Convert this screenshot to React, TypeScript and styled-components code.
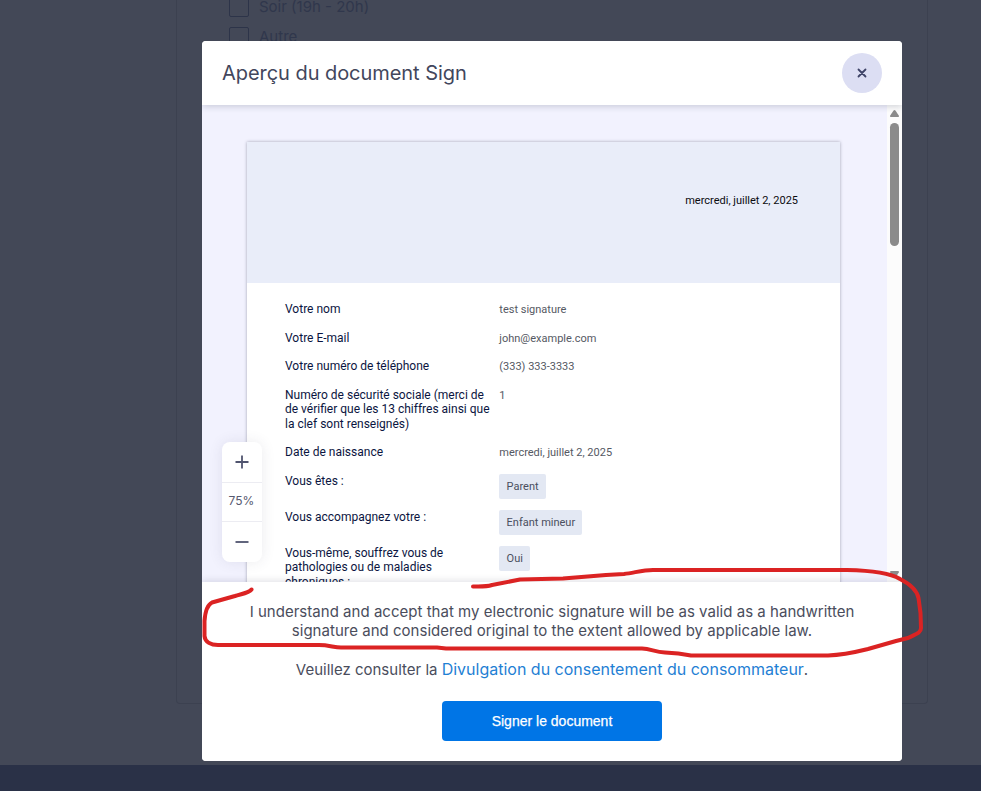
import React from 'react';
import styled, { createGlobalStyle } from 'styled-components';

const GlobalStyle = createGlobalStyle`
  *, *::before, *::after { box-sizing: border-box; }
  body { margin: 0; overflow: hidden; background: #434857; }
`;

const Page = styled.div`
  position: relative;
  display: flex;
  flex-direction: column;
  width: 981px;
  height: 791px;
  overflow: hidden;
  background: #434857;
  font-family: Inter, sans-serif;
`;

const FormCard = styled.section`
  display: flex;
  flex-direction: column;
  gap: 10px;
  width: 752px;
  height: 704px;
  margin-left: 176px;
  padding-left: 52px;
  border: 1px solid #3c4150;
  border-top: 0;
  border-radius: 0 0 4px 4px;
`;

const Option = styled.div`
  display: flex;
  align-items: center;
  gap: 10px;
  height: 20px;
  color: #30374c;
  font-size: 15px;
  line-height: 18px;

  &:first-child { margin-top: -3px; }
`;

const OptionText = styled.span`
  margin-top: -1px;
`;

const OptionBox = styled.span`
  width: 20px;
  height: 20px;
  border: 1px solid #2d3449;
  border-radius: 2px;
`;

const FooterBar = styled.div`
  height: 26px;
  margin-top: auto;
  background: #2a3147;
`;

const Overlay = styled.div`
  position: absolute;
  inset: 0;
  padding: 41px 79px 30px 202px;
`;

const Modal = styled.div`
  display: flex;
  flex-direction: column;
  height: 720px;
  overflow: hidden;
  border-radius: 4px;
  background: #fff;
`;

const Header = styled.header`
  position: relative;
  z-index: 1;
  display: flex;
  flex: none;
  align-items: center;
  justify-content: space-between;
  height: 64px;
  padding: 0 20px;
  background: #fff;
  box-shadow: 0 2px 6px rgba(40, 44, 70, 0.18);
`;

const Title = styled.h1`
  margin: 0;
  color: #42465c;
  font-size: 20px;
  font-weight: 400;
  line-height: 24px;
  letter-spacing: -0.05px;
`;

const CloseButton = styled.button`
  display: grid;
  place-items: center;
  width: 40px;
  height: 40px;
  padding: 0;
  border: 0;
  border-radius: 50%;
  background: #dcdef3;
`;

const Preview = styled.div`
  position: relative;
  display: flex;
  flex: none;
  height: 477px;
  overflow: hidden;
  background: #f2f2fe;
`;

const Viewport = styled.div`
  flex: 1;
  height: 477px;
  padding: 37px 47px 0 45px;
  overflow: hidden;
`;

const Paper = styled.article`
  width: 593px;
  height: 700px;
  background: #fff;
  box-shadow: 0 0 3px rgba(40, 44, 70, 0.4);
`;

const Banner = styled.div`
  display: flex;
  justify-content: flex-end;
  height: 141px;
  padding: 52px 42px 0 0;
  background: #e9edf9;
  color: #0b0b10;
  font: 11px/14px Roboto, sans-serif;
`;

const Fields = styled.dl`
  display: flex;
  flex-direction: column;
  gap: 14.2px;
  margin: 0;
  padding: 19.3px 38px 0;
  font-family: Roboto, sans-serif;
`;

const Field = styled.div<{ $chip?: boolean }>`
  display: grid;
  grid-template-columns: 214.3px 1fr;
  min-height: ${(p) => (p.$chip ? '21.8px' : '14.4px')};
`;

const Label = styled.dt`
  color: #0b1541;
  font-size: 12px;
  line-height: 14.4px;
  white-space: pre-line;
`;

const Value = styled.dd<{ $chip?: boolean }>`
  height: 14px;
  margin: 0;
  padding-top: ${(p) => (p.$chip ? '0' : '0.7px')};
  color: #555963;
  font-size: 11px;
  line-height: 14px;
`;

const Chip = styled.span`
  display: block;
  width: max-content;
  height: 25px;
  padding: 0 7.3px;
  border-radius: 2px;
  background: #e3e8f3;
  color: #4a4f60;
  line-height: 25px;
`;

const Scrollbar = styled.div`
  display: flex;
  flex: none;
  flex-direction: column;
  align-items: center;
  width: 15px;
  padding: 5px 0 4px;
  background: #fcfcfc;
`;

const Thumb = styled.div`
  width: 9px;
  height: 123px;
  margin: 6px 0 auto;
  border-radius: 5px;
  background: #8b8b8b;
`;

const ZoomPanel = styled.div`
  position: absolute;
  left: 20px;
  top: 337px;
  display: flex;
  flex-direction: column;
  width: 40px;
  height: 120px;
  border-radius: 8px;
  background: #fff;
  box-shadow: 0 0 14px rgba(60, 60, 90, 0.1);
`;

const ZoomCell = styled.div<{ $height: number }>`
  display: grid;
  place-items: center;
  height: ${(p) => p.$height}px;
  color: #565a70;
  font-size: 12px;

  & + & { border-top: 1px solid #ececf2; }
`;

const ZoomLevel = styled.span`
  margin: -3px 1px 0 0;
`;

const Consent = styled.footer`
  position: relative;
  display: flex;
  flex: 1;
  flex-direction: column;
  align-items: center;
  padding-top: 20px;
  background: #fff;
  box-shadow: 0 -2px 6px rgba(40, 44, 70, 0.12);
  color: #4a4d5c;
  font-size: 15px;
  text-align: center;
`;

const Statement = styled.p`
  margin: 0;
  line-height: 19px;
  letter-spacing: 0.025px;
  white-space: pre-line;
`;

const Disclosure = styled.p`
  margin: 19px 0 0;
  line-height: 20px;
`;

const DisclosureLink = styled.a`
  color: #1f80d4;
  font-size: 16px;
`;

const SignButton = styled.button`
  width: 220px;
  height: 40px;
  margin-top: 21px;
  padding: 0;
  border: 0;
  border-radius: 4px;
  background: #0075e6;
  color: #fff;
  font: 500 14px/20px "Liberation Sans", sans-serif;
  -webkit-text-stroke: 0.25px #fff;
`;

const Markup = styled.svg`
  position: absolute;
  inset: 0;
  pointer-events: none;
`;

const fields: { label: string; value: string; chip?: boolean }[] = [
  { label: 'Votre nom', value: 'test signature' },
  { label: 'Votre E-mail', value: 'john@example.com' },
  { label: 'Votre numéro de téléphone', value: '(333) 333-3333' },
  {
    label: 'Numéro de sécurité sociale (merci de\nde vérifier que les 13 chiffres ainsi que\nla clef sont renseignés)',
    value: '1',
  },
  { label: 'Date de naissance', value: 'mercredi, juillet 2, 2025' },
  { label: 'Vous êtes :', value: 'Parent', chip: true },
  { label: 'Vous accompagnez votre :', value: 'Enfant mineur', chip: true },
  { label: 'Vous-même, souffrez vous de\npathologies ou de maladies\nchroniques :', value: 'Oui', chip: true },
];

export default function App() {
  return (
    <Page>
      <GlobalStyle />
      <FormCard>
        <Option><OptionBox /><OptionText>Soir (19h - 20h)</OptionText></Option>
        <Option><OptionBox /><OptionText>Autre</OptionText></Option>
      </FormCard>
      <FooterBar />
      <Overlay>
        <Modal role="dialog" aria-label="Aperçu du document Sign">
          <Header>
            <Title>Aperçu du document Sign</Title>
            <CloseButton aria-label="Fermer">
              <svg width="10" height="10" viewBox="0 0 10 10" fill="none" stroke="#3f4468" strokeWidth="1.8" strokeLinecap="round">
                <path d="M1.500 1.500 8.500 8.500M8.500 1.500 1.500 8.500" />
              </svg>
            </CloseButton>
          </Header>
          <Preview>
            <Viewport>
              <Paper>
                <Banner>mercredi, juillet 2, 2025</Banner>
                <Fields>
                  {fields.map((f) => (
                    <Field key={f.label} $chip={f.chip}>
                      <Label>{f.label}</Label>
                      <Value $chip={f.chip}>{f.chip ? <Chip>{f.value}</Chip> : f.value}</Value>
                    </Field>
                  ))}
                </Fields>
              </Paper>
            </Viewport>
            <Scrollbar>
              <svg width="9" height="7" viewBox="0 0 9 7" fill="#8b8b8b"><path d="M3.6.6q.9-1.1 1.8 0L8.8 5.4Q9.3 7 8 7H1Q-.3 7 .2 5.4Z" /></svg>
              <Thumb />
              <svg width="9" height="7" viewBox="0 0 9 7" fill="#8b8b8b"><path d="M3.6 6.4q.9 1.1 1.8 0L8.8 1.6Q9.3 0 8 0H1Q-.3 0 .2 1.6Z" /></svg>
            </Scrollbar>
            <ZoomPanel>
              <ZoomCell $height={40}>
                <svg width="14" height="14" viewBox="0 0 14 14" stroke="#50546f" strokeWidth="1.8"><path d="M7 .5v13M.5 7h13" /></svg>
              </ZoomCell>
              <ZoomCell $height={39}><ZoomLevel>75%</ZoomLevel></ZoomCell>
              <ZoomCell $height={41}>
                <svg width="14" height="14" viewBox="0 0 14 14" stroke="#50546f" strokeWidth="1.8"><path d="M.5 7h13" /></svg>
              </ZoomCell>
            </ZoomPanel>
          </Preview>
          <Consent>
            <Statement>
              {'I understand and accept that my electronic signature will be as valid as a handwritten\nsignature and considered original to the extent allowed by applicable law.'}
            </Statement>
            <Disclosure>
              Veuillez consulter la <DisclosureLink>Divulgation du consentement du consommateur</DisclosureLink>.
            </Disclosure>
            <SignButton>Signer le document</SignButton>
          </Consent>
        </Modal>
      </Overlay>
      <Markup width="981" height="791" viewBox="0 0 981 791" fill="none" stroke="#db2323" strokeWidth="4" strokeLinecap="round" strokeLinejoin="round">
        <path d="M251.500 589.500C249 593 241 594 235 596L212 602.500C207 605 205 614 204.500 621V636C205 642 211 645 218 645H319C329 645 334 647.500 341 647.500H437L446 648.500H642C651 649 655 652 665 652.500C675 653 683 654 691 655.500H828C845 655 856 652 868 649L896 641L908 638C916 634 921 633 921 628L920.500 613L918.500 598C917 591 910 584 900 579C890 573 870 570.500 847 570H653C642 570 634 573 624 574L606 575L563 578.500L520 579.500L492 585C486 587 480 586.500 473 586.500" />
      </Markup>
    </Page>
  );
}
